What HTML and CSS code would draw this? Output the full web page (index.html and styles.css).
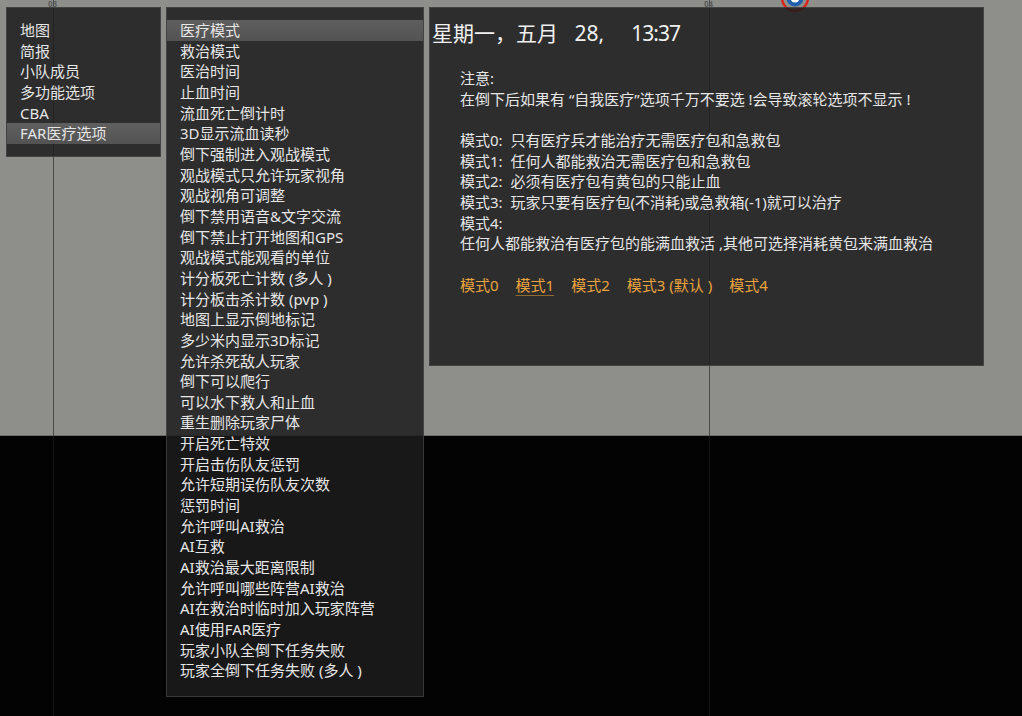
FILE: index.html
```html
<!DOCTYPE html>
<html lang="zh">
<head>
    <meta charset="UTF-8">
    <title>FAR医疗选项</title>
    <link rel="stylesheet" href="styles.css">
</head>
<body>
    <!-- 地图背景 -->
    <div class="map">
        <div class="map-land"></div>
        <div class="grid-line line-03"></div>
        <div class="grid-line line-04"></div>
        <span class="grid-label label-03">03</span>
        <span class="grid-label label-04">04</span>
        <svg class="map-marker" width="30" height="30" viewBox="0 0 30 30">
            <circle cx="15" cy="15" r="13" fill="none" stroke="#d8261d" stroke-width="2.5"/>
            <circle cx="15" cy="15" r="8.5" fill="#1f5fae"/>
            <circle cx="15" cy="15" r="4.5" fill="#ffffff"/>
        </svg>
    </div>

    <div class="screen">
        <!-- 主菜单 -->
        <ul class="panel menu">
            <li>地图</li>
            <li>简报</li>
            <li>小队成员</li>
            <li>多功能选项</li>
            <li>CBA</li>
            <li class="active">FAR医疗选项</li>
        </ul>

        <!-- 选项列表 -->
        <ul class="panel options">
            <li class="active">医疗模式</li>
            <li>救治模式</li>
            <li>医治时间</li>
            <li>止血时间</li>
            <li>流血死亡倒计时</li>
            <li>3D显示流血读秒</li>
            <li>倒下强制进入观战模式</li>
            <li>观战模式只允许玩家视角</li>
            <li>观战视角可调整</li>
            <li>倒下禁用语音&amp;文字交流</li>
            <li>倒下禁止打开地图和GPS</li>
            <li>观战模式能观看的单位</li>
            <li>计分板死亡计数 (多人 )</li>
            <li>计分板击杀计数 (pvp )</li>
            <li>地图上显示倒地标记</li>
            <li>多少米内显示3D标记</li>
            <li>允许杀死敌人玩家</li>
            <li>倒下可以爬行</li>
            <li>可以水下救人和止血</li>
            <li>重生删除玩家尸体</li>
            <li>开启死亡特效</li>
            <li>开启击伤队友惩罚</li>
            <li>允许短期误伤队友次数</li>
            <li>惩罚时间</li>
            <li>允许呼叫AI救治</li>
            <li>AI互救</li>
            <li>AI救治最大距离限制</li>
            <li>允许呼叫哪些阵营AI救治</li>
            <li>AI在救治时临时加入玩家阵营</li>
            <li>AI使用FAR医疗</li>
            <li>玩家小队全倒下任务失败</li>
            <li>玩家全倒下任务失败 (多人 )</li>
        </ul>

        <!-- 说明面板 -->
        <div class="panel detail">
            <div class="clock">星期一，五月   28,     <span class="time">13:37</span></div>
            <div class="notes">
                <p>注意:</p>
                <p>在倒下后如果有 “自我医疗”选项千万不要选 !会导致滚轮选项不显示 !</p>
                <p class="blank"></p>
                <p>模式0:  只有医疗兵才能治疗无需医疗包和急救包</p>
                <p>模式1:  任何人都能救治无需医疗包和急救包</p>
                <p>模式2:  必须有医疗包有黄包的只能止血</p>
                <p>模式3:  玩家只要有医疗包(不消耗)或急救箱(-1)就可以治疗</p>
                <p>模式4:</p>
                <p>任何人都能救治有医疗包的能满血救活 ,其他可选择消耗黄包来满血救治</p>
                <p class="blank"></p>
                <div class="modes">
                    <a href="#">模式0</a>
                    <a href="#" class="current">模式1</a>
                    <a href="#">模式2</a>
                    <a href="#">模式3 (默认 )</a>
                    <a href="#">模式4</a>
                </div>
            </div>
        </div>
    </div>
</body>
</html>
```

FILE: styles.css
```css
html, body {
    margin: 0;
    height: 716px;
    overflow: hidden;
}
body {
    position: relative;
    background: #030303;
    font-family: "Noto Sans", "Noto Sans CJK SC", sans-serif;
    font-size: 15px;
    color: #e6e6e6;
}
.map {
    position: absolute;
    inset: 0;
}
.map-land {
    height: 435px;
    background: #8e8f8b;
    border-bottom: 1px solid #6c6d69;
}
.grid-line {
    position: absolute;
    top: 0;
    bottom: 0;
    width: 1px;
    background: linear-gradient(#4a4b48 0, #4a4b48 436px, #161616 436px);
}
.line-03 { left: 53px; }
.line-04 { left: 709px; }
.grid-label {
    position: absolute;
    top: 0;
    font-size: 8px;
    line-height: 7px;
    font-weight: bold;
    color: #5a5b58;
}
.label-03 { left: 48px; }
.label-04 { left: 704px; }
.map-marker {
    position: absolute;
    left: 780px;
    top: -17px;
}
.screen {
    position: relative;
    display: flex;
    align-items: flex-start;
    gap: 5px;
    padding: 7px 0 0 6px;
}
.panel {
    margin: 0;
    list-style: none;
    background: rgba(28, 28, 28, 0.85);
    border: 1px solid rgba(90, 90, 90, 0.5);
    box-sizing: border-box;
}
.panel li {
    line-height: 20.65px;
    white-space: nowrap;
}
.panel li.active {
    background: linear-gradient(rgba(255,255,255,0.24), rgba(255,255,255,0.18));
}
.menu {
    width: 155px;
    height: 150px;
    padding: 12px 0 0;
}
.menu li {
    padding-left: 13px;
}
.options {
    width: 258px;
    height: 690px;
    padding: 12px 0 0;
}
.options li {
    padding-left: 13px;
}
.detail {
    width: 555px;
    height: 359px;
    padding: 8px 0 0 2px;
}
.clock {
    font-size: 21px;
    line-height: 34px;
    white-space: pre;
    color: #f0f0f0;
    margin-bottom: 18px;
}
.clock .time {
    letter-spacing: -1px;
}
.notes {
    padding-left: 28px;
}
.notes p {
    margin: 0;
    line-height: 20.65px;
    white-space: pre;
}
.notes p.blank {
    height: 20.65px;
}
.modes {
    display: flex;
    gap: 17px;
    line-height: 20.65px;
}
.modes a {
    color: #eaa43e;
    text-decoration: none;
}
.modes a.current {
    text-decoration: underline;
    text-decoration-color: #8c6a30;
    text-underline-offset: 4px;
}
```
